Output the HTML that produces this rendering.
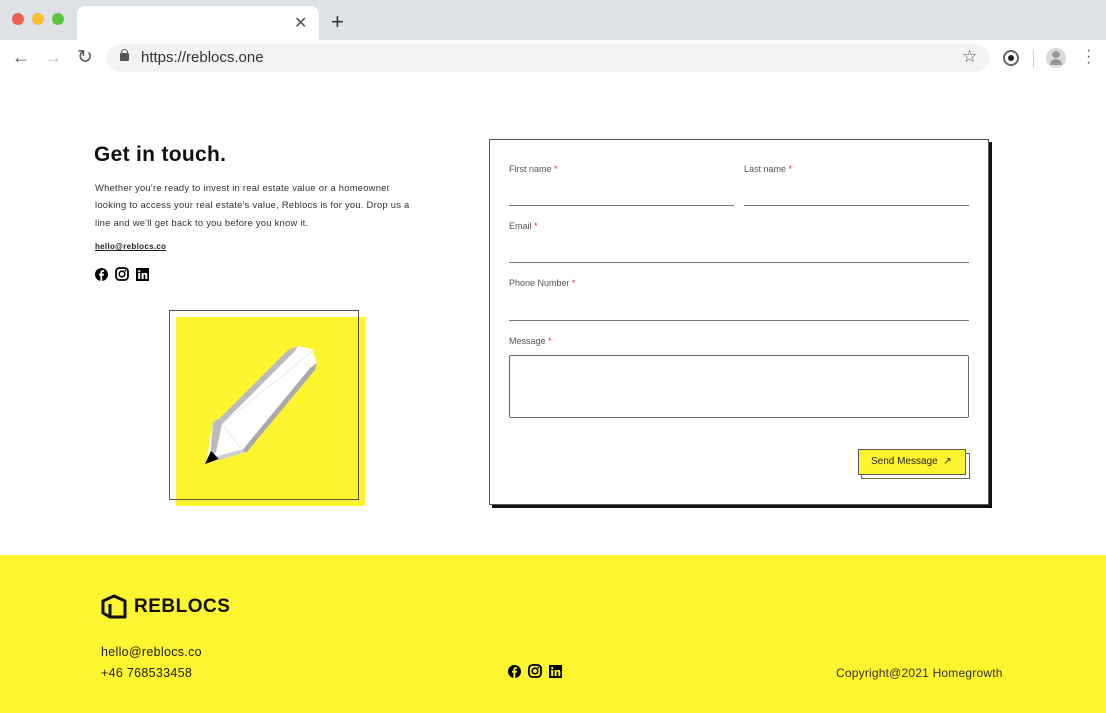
<!DOCTYPE html>
<html><head><meta charset="utf-8"><style>
*{margin:0;padding:0;box-sizing:border-box}
body{width:1106px;height:713px;overflow:hidden;background:#fff;font-family:"Liberation Sans",sans-serif;position:relative}
.a{position:absolute}
.lbl{font-size:9px;color:#555}
.lbl i{color:#c33;font-style:normal}
.line{height:1px;background:#777}
</style></head><body>
<!-- browser chrome -->
<div class="a" style="left:0;top:0;width:1106px;height:40px;background:#dee1e6"></div>
<div class="a" style="left:12px;top:13px;width:12px;height:12px;border-radius:50%;background:#ed5e55"></div>
<div class="a" style="left:32px;top:13px;width:12px;height:12px;border-radius:50%;background:#f4bd32"></div>
<div class="a" style="left:52px;top:13px;width:12px;height:12px;border-radius:50%;background:#5ec443"></div>
<div class="a" style="left:77px;top:6px;width:242px;height:34px;background:#fff;border-radius:8px 8px 0 0"></div>
<div class="a" style="left:294px;top:13px;font-size:16px;color:#555">✕</div>
<div class="a" style="left:331px;top:9px;font-size:22px;color:#333">+</div>
<div class="a" style="left:0;top:40px;width:1106px;height:38px;background:#fff"></div>
<div class="a" style="left:12px;top:47px;font-size:18px;color:#555">←</div>
<div class="a" style="left:44px;top:47px;font-size:18px;color:#bbb">→</div>
<div class="a" style="left:77px;top:46px;font-size:19px;color:#555">↻</div>
<div class="a" style="left:107px;top:44px;width:882px;height:28px;border-radius:14px;background:#f1f3f4"></div>
<div class="a" style="left:120px;top:53px;width:9px;height:8px;background:#555;border-radius:1px"></div>
<div class="a" style="left:121px;top:49px;width:7px;height:7px;border:1.5px solid #555;border-radius:4px 4px 0 0"></div>
<div class="a" style="left:141px;top:49px;font-size:15px;color:#333">https://reblocs.one</div>
<div class="a" style="left:962px;top:47px;font-size:17px;color:#555">☆</div>
<div class="a" style="left:1003px;top:50px;width:16px;height:16px;border-radius:50%;border:2px solid #666"><div style="margin:3px;width:6px;height:6px;border-radius:50%;background:#222"></div></div>
<div class="a" style="left:1033px;top:49px;width:1px;height:18px;background:#ccc"></div>
<div class="a" style="left:1046px;top:48px;width:20px;height:20px;border-radius:50%;background:#dadce0"></div>
<div class="a" style="left:1052px;top:51px;width:8px;height:7px;border-radius:50%;background:#999"></div>
<div class="a" style="left:1050px;top:59px;width:12px;height:6px;border-radius:6px 6px 0 0;background:#999"></div>
<div class="a" style="left:1086px;top:48px;font-size:16px;color:#555;line-height:6px">·<br>·<br>·</div>

<!-- left content -->
<div class="a" style="left:94px;top:143px;font-size:21px;font-weight:bold;color:#111;letter-spacing:.3px">Get in touch.</div>
<div class="a" style="left:95px;top:179px;width:322px;font-size:9.4px;line-height:17.4px;color:#333;letter-spacing:.25px">Whether you're ready to invest in real estate value or a homeowner looking to access your real estate's value, Reblocs is for you. Drop us a line and we'll get back to you before you know it.</div>
<div class="a" style="left:95px;top:242px;font-size:8px;font-weight:bold;color:#222;text-decoration:underline;letter-spacing:.3px">hello@reblocs.co</div>
<div class="a" style="left:95px;top:267px;display:flex;gap:7px;align-items:center">
<svg width="13" height="13" viewBox="0 0 13 13"><circle cx="6.5" cy="6.5" r="6.5" fill="#000"/><path d="M7.2 13V7.6h1.6l.2-1.8H7.2V4.7c0-.5.2-.8.8-.8h1V2.3c-.3 0-.8-.1-1.4-.1-1.4 0-2.2.8-2.2 2.3v1.3H4v1.8h1.4V13z" fill="#fff"/></svg>
<svg width="14" height="14" viewBox="0 0 14 14"><rect x="1" y="1" width="12" height="12" rx="3.5" fill="none" stroke="#000" stroke-width="1.8"/><circle cx="7" cy="7" r="2.8" fill="none" stroke="#000" stroke-width="1.6"/><circle cx="10.4" cy="3.6" r=".9"/></svg>
<svg width="13" height="13" viewBox="0 0 13 13"><rect width="13" height="13" fill="#000"/><rect x="2.2" y="5" width="2" height="6" fill="#fff"/><circle cx="3.2" cy="3.1" r="1.1" fill="#fff"/><path d="M5.6 5h1.9v.9c.4-.7 1.1-1 1.9-1 1.5 0 1.9 1 1.9 2.3V11H9.3V7.6c0-.7-.2-1.1-.8-1.1s-.9.4-.9 1.1V11h-2z" fill="#fff"/></svg>
</div>
<!-- pencil illustration -->
<div class="a" style="left:176px;top:317px;width:189px;height:189px;background:#fdf42e"></div>
<div class="a" style="left:169px;top:310px;width:190px;height:190px;border:1px solid #555"></div>
<svg class="a" style="left:160px;top:300px" width="220" height="215" viewBox="0 0 220 215">
<polygon points="53,122 60,118 128,50 138,46 152,49 157,63 155,70 87,152 59,160 46,163" fill="#fff"/>
<polygon points="53,122 60,118 128,50 138,46 134,52 62,124 56,152 50,158" fill="#bbb"/>
<polygon points="157,63 155,70 87,152 80,153 150,68" fill="#aaa"/>
<polygon points="87,152 59,160 58,156 80,150" fill="#ccc"/>
<line x1="62" y1="124" x2="152" y2="52" stroke="#ddd" stroke-width=".6"/>
<line x1="62" y1="124" x2="82" y2="150" stroke="#ddd" stroke-width=".6"/>
<polygon points="45,164 51,151 59,159" fill="#000"/>
</svg>

<!-- form -->
<div class="a" style="left:492px;top:142px;width:500px;height:366px;background:#111"></div>
<div class="a" style="left:489px;top:139px;width:500px;height:366px;border:1px solid #555;background:#fff"></div>
<div class="a lbl" style="left:509px;top:164px">First name <i>*</i></div>
<div class="a lbl" style="left:744px;top:164px">Last name <i>*</i></div>
<div class="a line" style="left:509px;top:205px;width:225px"></div>
<div class="a line" style="left:744px;top:205px;width:225px"></div>
<div class="a lbl" style="left:509px;top:221px">Email <i>*</i></div>
<div class="a line" style="left:509px;top:262px;width:460px"></div>
<div class="a lbl" style="left:509px;top:278px">Phone Number <i>*</i></div>
<div class="a line" style="left:509px;top:320px;width:460px"></div>
<div class="a lbl" style="left:509px;top:336px">Message <i>*</i></div>
<div class="a" style="left:509px;top:355px;width:460px;height:63px;border:1px solid #666;border-radius:2px"></div>
<div class="a" style="left:861px;top:453px;width:109px;height:26px;border:1px solid #666;background:#fff"></div>
<div class="a" style="left:858px;top:449px;width:108px;height:26px;border:1px solid #555;background:#fdf42e;font-size:10px;color:#222;line-height:24px;padding-left:12px">Send Message &nbsp;↗</div>

<!-- footer -->
<div class="a" style="left:0;top:555px;width:1106px;height:158px;background:#fdf52f"></div>
<svg class="a" style="left:100px;top:593px" width="28" height="28" viewBox="0 0 28 28"><path d="M6 6 L13 2 L13 5" fill="none" stroke="#fff" stroke-width="2"/><path d="M3 8 L14 3 L25 8 L25 24 L10 24 L3 20 Z" fill="none" stroke="#111" stroke-width="3" stroke-linejoin="round"/><path d="M10 11 L10 24" stroke="#111" stroke-width="3"/></svg>
<div class="a" style="left:134px;top:596px;font-size:19px;font-weight:bold;color:#111;letter-spacing:.5px">REBLOCS</div>
<div class="a" style="left:101px;top:645px;font-size:12.5px;color:#222;letter-spacing:.3px">hello@reblocs.co</div>
<div class="a" style="left:101px;top:666px;font-size:12.5px;color:#222;letter-spacing:.3px">+46 768533458</div>
<div class="a" style="left:508px;top:664px;display:flex;gap:7px;align-items:center">
<svg width="13" height="13" viewBox="0 0 13 13"><circle cx="6.5" cy="6.5" r="6.5" fill="#000"/><path d="M7.2 13V7.6h1.6l.2-1.8H7.2V4.7c0-.5.2-.8.8-.8h1V2.3c-.3 0-.8-.1-1.4-.1-1.4 0-2.2.8-2.2 2.3v1.3H4v1.8h1.4V13z" fill="#fdf52f"/></svg>
<svg width="14" height="14" viewBox="0 0 14 14"><rect x="1" y="1" width="12" height="12" rx="3.5" fill="none" stroke="#000" stroke-width="1.8"/><circle cx="7" cy="7" r="2.8" fill="none" stroke="#000" stroke-width="1.6"/><circle cx="10.4" cy="3.6" r=".9"/></svg>
<svg width="13" height="13" viewBox="0 0 13 13"><rect width="13" height="13" fill="#000"/><rect x="2.2" y="5" width="2" height="6" fill="#fdf52f"/><circle cx="3.2" cy="3.1" r="1.1" fill="#fdf52f"/><path d="M5.6 5h1.9v.9c.4-.7 1.1-1 1.9-1 1.5 0 1.9 1 1.9 2.3V11H9.3V7.6c0-.7-.2-1.1-.8-1.1s-.9.4-.9 1.1V11h-2z" fill="#fdf52f"/></svg>
</div>
<div class="a" style="left:836px;top:666px;font-size:12px;color:#333;letter-spacing:.2px">Copyright@2021 Homegrowth</div>
</body></html>
